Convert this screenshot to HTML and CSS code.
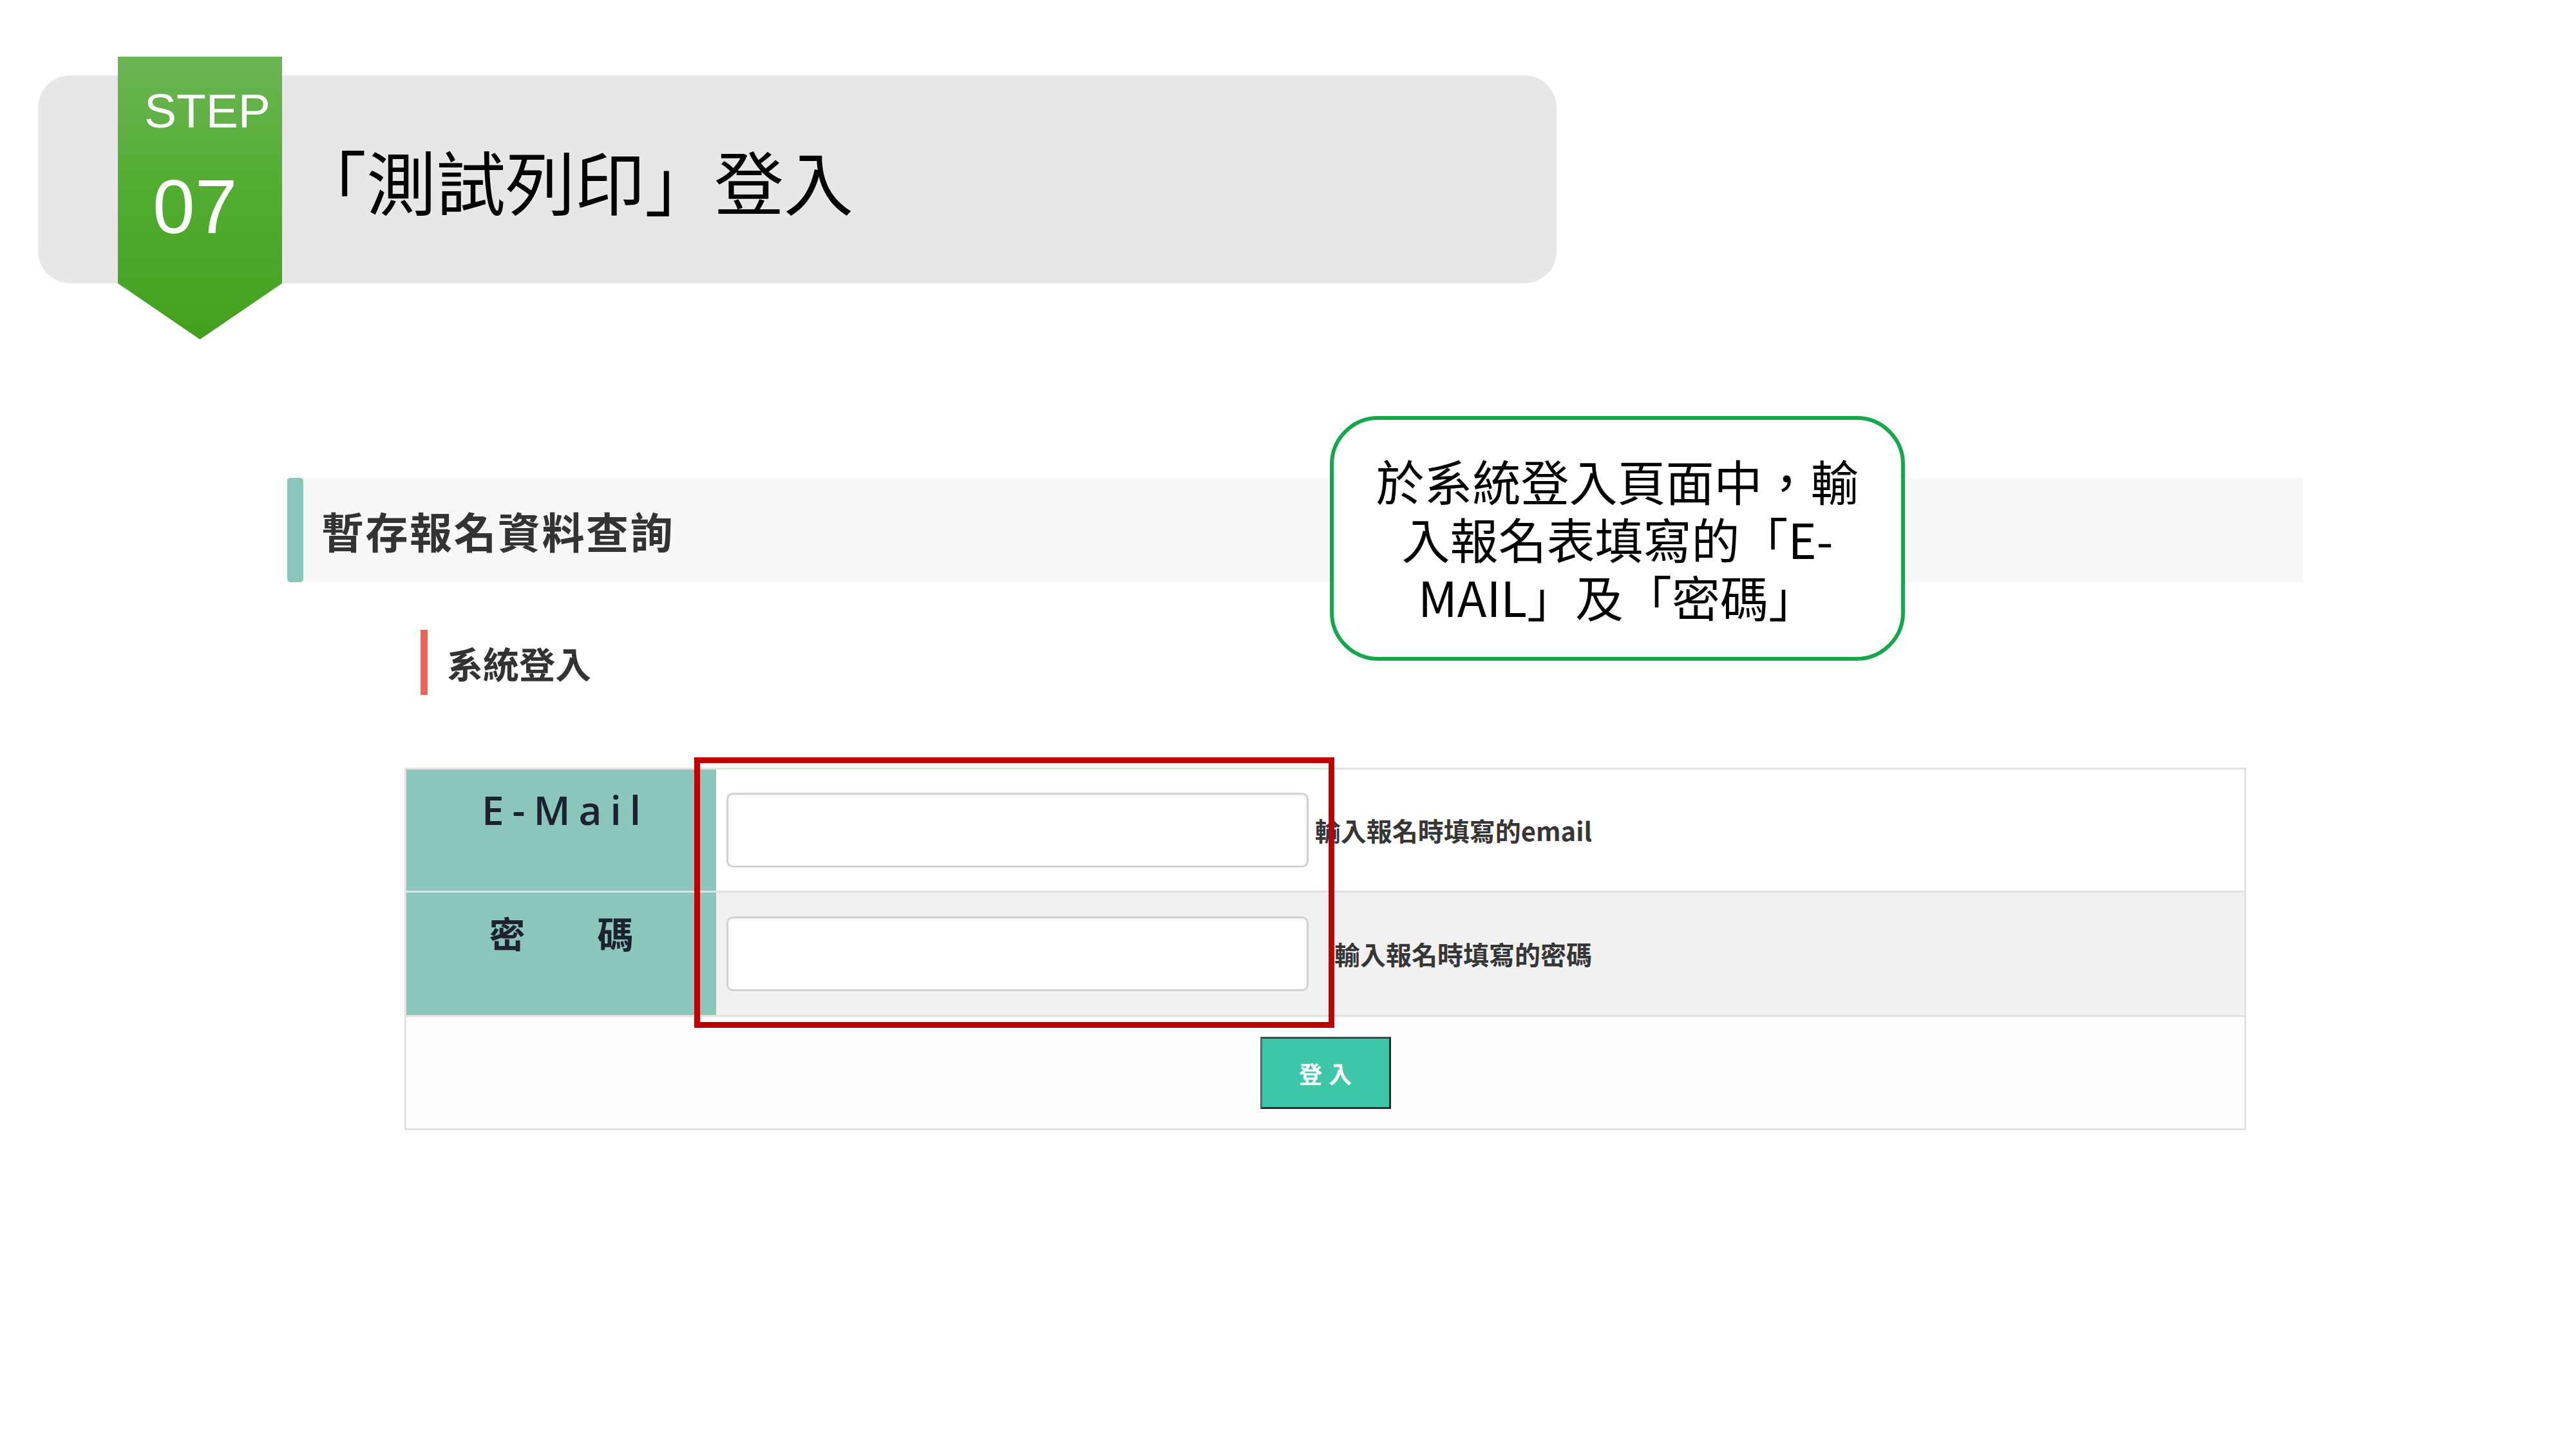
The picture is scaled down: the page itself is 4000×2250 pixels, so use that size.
FILE: index.html
```html
<!DOCTYPE html>
<html lang="zh-TW">
<head>
<meta charset="utf-8">
<title>測試列印登入</title>
<link rel="stylesheet" href="styles.css">
</head>
<body>
<div class="page">
  <header class="step-header">
    <div class="step-badge">
      <span class="step-label">STEP</span>
      <span class="step-num">07</span>
    </div>
    <h1 class="step-title">「測試列印」登入</h1>
  </header>

  <section class="query">
    <div class="query-title">
      <span class="accent"></span>
      <h2>暫存報名資料查詢</h2>
    </div>
    <div class="sub-title">
      <span class="accent-red"></span>
      <h3>系統登入</h3>
    </div>

    <div class="login-wrap">
      <div class="login-table">
        <div class="row row-1">
          <div class="lbl"><span class="lbl-en">E-Mail</span></div>
          <div class="field"><input class="inp" type="text"></div>
          <div class="help">輸入報名時填寫的email</div>
          <div class="rest"></div>
        </div>
        <div class="row row-2">
          <div class="lbl"><span class="lbl-zh">密　　碼</span></div>
          <div class="field"><input class="inp" type="password"></div>
          <div class="help">輸入報名時填寫的密碼</div>
          <div class="rest"></div>
        </div>
        <div class="row row-3">
          <button class="btn-login" type="button">登入</button>
        </div>
      </div>
      <div class="highlight"></div>
    </div>
  </section>

  <div class="callout">於系統登入頁面中，輸<br>入報名表填寫的「E-<br>MAIL」及「密碼」</div>
</div>
</body>
</html>
```

FILE: styles.css
```css
html, body {
  margin: 0;
  padding: 0;
  background: #ffffff;
}

.page {
  position: relative;
  width: 4000px;
  height: 2250px;
  overflow: hidden;
  background: #ffffff;
  font-family: "Noto Sans CJK TC", "Noto Sans", sans-serif;
}

/* ---------- Step header ---------- */
.step-header {
  position: relative;
  box-sizing: border-box;
  margin: 117px 0 0 59px;
  width: 2358px;
  height: 323px;
  background: #e7e7e7;
  border-radius: 50px;
  display: flex;
  align-items: center;
  padding-left: 402px;
}

.step-badge {
  position: absolute;
  left: 124px;
  top: -29px;
  width: 255px;
  height: 439px;
  background: linear-gradient(180deg, #6bb555 0%, #52ad31 45%, #43a01d 100%);
  clip-path: polygon(0 0, 100% 0, 100% 80.2%, 50% 100%, 0 80.2%);
  display: flex;
  flex-direction: column;
  align-items: flex-start;
  font-family: "Liberation Sans", Arial, sans-serif;
  color: #ffffff;
}

.step-label {
  font-size: 75px;
  line-height: 75px;
  margin: 47px 0 0 41px;
}

.step-num {
  font-size: 118px;
  line-height: 118px;
  margin: 52px 0 0 54px;
}

.step-title {
  margin: 0;
  font-family: "Noto Sans CJK TC", sans-serif;
  font-weight: 400;
  font-size: 108px;
  line-height: 1;
  color: #000000;
}

/* ---------- Query section ---------- */
.query {
  margin-top: 302px;
}

.query-title {
  margin-left: 446px;
  width: 3130px;
  height: 162px;
  background: #f8f8f8;
  display: flex;
  align-items: center;
}

.accent {
  width: 25px;
  align-self: stretch;
  background: #88c6b9;
  border-radius: 5px;
}

.query-title h2 {
  margin: 0 0 0 28px;
  font-size: 66px;
  line-height: 1;
  font-weight: 700;
  letter-spacing: 2.5px;
  color: #333333;
}

.sub-title {
  margin: 74px 0 0 653px;
  height: 101px;
  display: flex;
  align-items: center;
}

.accent-red {
  width: 11px;
  height: 101px;
  background: #ee6352;
}

.sub-title h3 {
  margin: 0 0 0 30px;
  font-size: 56px;
  line-height: 1;
  font-weight: 700;
  color: #333333;
}

/* ---------- Login table ---------- */
.login-wrap {
  position: relative;
  margin: 113px 0 0 628px;
  width: 2860px;
}

.login-table {
  border: 3px solid #e2e2e2;
}

.row {
  display: flex;
  border-bottom: 3px solid #e2e2e2;
}

.row:last-child {
  border-bottom: 0;
}

.row-1 {
  height: 188px;
  background: #ffffff;
}

.row-2 {
  height: 190px;
  background: #f0f1f0;
}

.row-3 {
  height: 173px;
  background: #fdfdfd;
  justify-content: center;
  align-items: center;
}

.lbl {
  box-sizing: border-box;
  width: 481px;
  flex: none;
  background: #8ac6ba;
  text-align: center;
  padding-top: 22px;
  line-height: 80px;
  color: #1d2130;
}

.lbl-en {
  font-family: "Open Sans", "Noto Sans", sans-serif;
  font-weight: 600;
  font-size: 62px;
  letter-spacing: 13px;
  margin-right: -13px;
}

.lbl-zh {
  font-family: "Noto Sans CJK TC", sans-serif;
  font-weight: 700;
  font-size: 56px;
}

.field {
  box-sizing: border-box;
  width: 920px;
  flex: none;
  padding-left: 16px;
  display: flex;
  align-items: center;
}

.inp {
  box-sizing: border-box;
  width: 904px;
  height: 116px;
  margin: 0;
  border: 3px solid #d2d2d2;
  border-radius: 10px;
  background: #ffffff;
  box-shadow: inset 0 2px 3px rgba(0, 0, 0, 0.06);
  outline: none;
}

.help {
  width: 440px;
  flex: none;
  display: flex;
  align-items: center;
  justify-content: flex-end;
  font-size: 40px;
  font-weight: 700;
  color: #363636;
  white-space: nowrap;
}

.rest {
  flex: 1;
}

.btn-login {
  box-sizing: border-box;
  width: 203px;
  height: 112px;
  margin: 0;
  padding: 0 0 0 10px;
  background: #3dc7a9;
  border: 3px solid #2a2a2a;
  border-left-color: #5d6b68;
  border-top-color: #34504a;
  color: #ffffff;
  font-family: "Noto Sans CJK TC", sans-serif;
  font-size: 36px;
  font-weight: 700;
  letter-spacing: 10px;
}

.highlight {
  position: absolute;
  left: 450px;
  top: -16px;
  width: 994px;
  height: 420px;
  box-sizing: border-box;
  border: 9px solid #c00000;
  pointer-events: none;
}

/* ---------- Callout ---------- */
.callout {
  position: absolute;
  left: 2065px;
  top: 646px;
  width: 893px;
  height: 380px;
  box-sizing: border-box;
  border: 6px solid #14a84c;
  border-radius: 75px;
  background: #ffffff;
  display: flex;
  align-items: center;
  justify-content: center;
  text-align: center;
  font-family: "Noto Sans CJK TC", sans-serif;
  font-weight: 400;
  font-size: 75px;
  line-height: 90px;
  color: #000000;
}
```
